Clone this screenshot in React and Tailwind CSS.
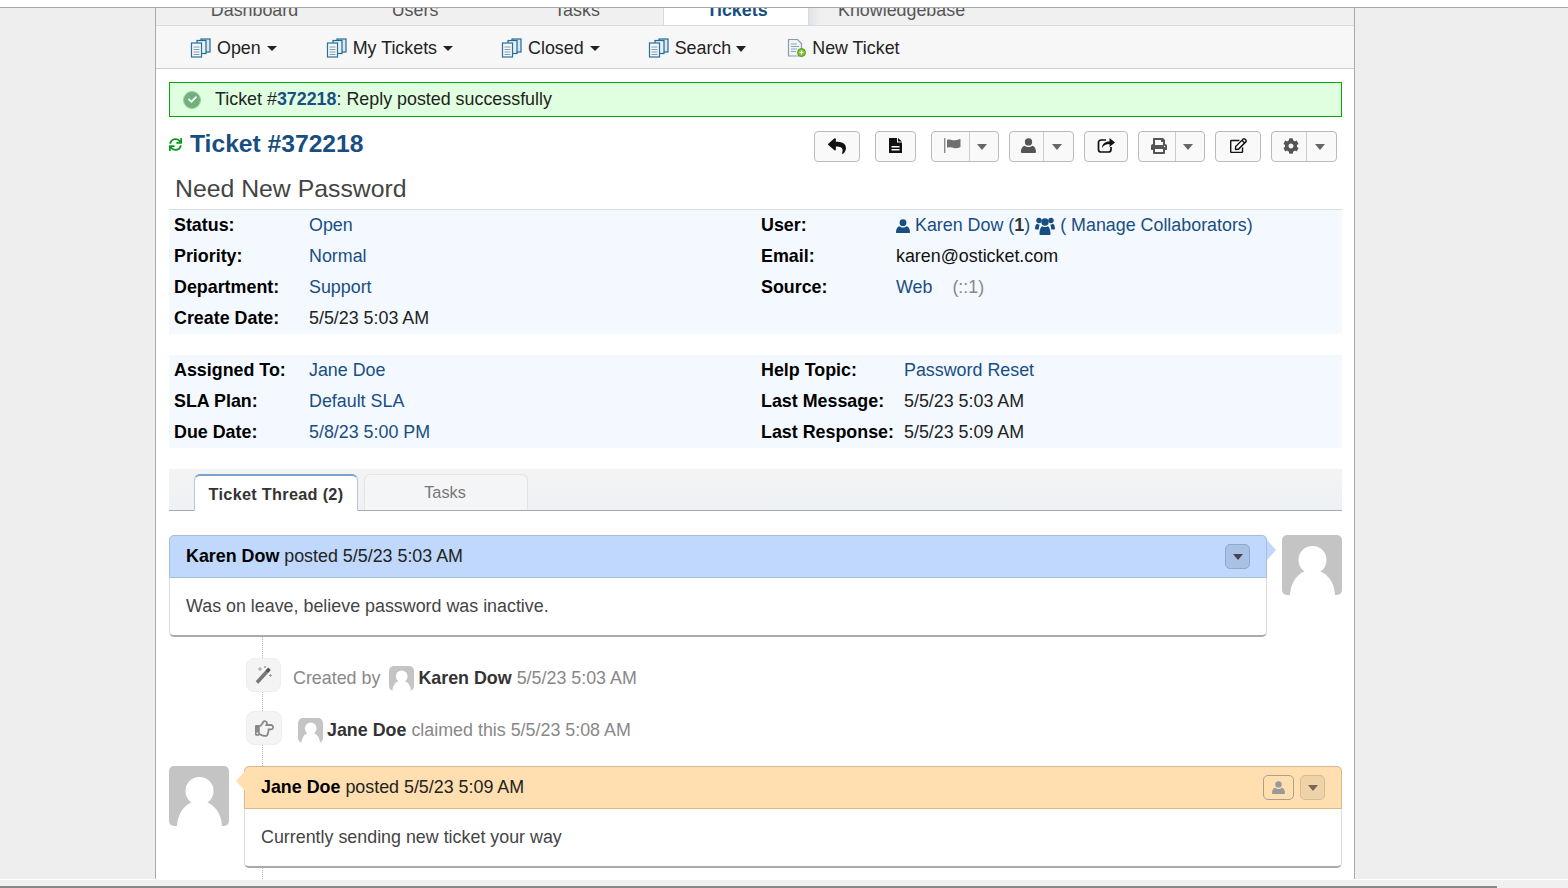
import React from 'react';
import { FaReply, FaPrint, FaRegEdit, FaCog, FaSync, FaRegHandPointRight, FaCheck } from 'react-icons/fa';

const Caret = ({ className = 'border-x-[5px] border-t-[6px] border-t-[#666]' }) => (
  <span className={`inline-block w-0 h-0 border-x-transparent ${className}`}></span>
);

// stacked documents icon from the nav bar
const QueueIcon = () => (
  <svg width="22" height="20" viewBox="0 0 22 20" className="shrink-0">
    <rect x="11" y="1" width="9" height="13" fill="#dbe7f0" stroke="#1f6a94" strokeWidth="1.2" />
    <rect x="7" y="2.5" width="9" height="13" fill="#e8eff5" stroke="#1f6a94" strokeWidth="1.2" />
    <rect x="1.5" y="5" width="10" height="14" fill="#f5f8fb" stroke="#2a6f97" strokeWidth="1.2" />
    <path d="M3.5 9h6M3.5 11.5h6M3.5 14h6M3.5 16.5h6" stroke="#7d9db3" strokeWidth="1" />
  </svg>
);

const NewTicketIcon = () => (
  <svg width="20" height="20" viewBox="0 0 20 20" className="shrink-0">
    <path d="M1.5 1.5h9l4 4v12.5h-13z" fill="#f1f4f7" stroke="#8a9aac" strokeWidth="1.2" />
    <path d="M4 6h6M4 8.5h8M4 11h6M4 13.5h5" stroke="#8fa3b8" strokeWidth="1" />
    <circle cx="14.5" cy="14.5" r="4" fill="#7cc234" stroke="#5a9a1e" strokeWidth="1" />
    <path d="M14.5 12.5v4M12.5 14.5h4" stroke="#fff" strokeWidth="1.2" />
  </svg>
);

const SaveIcon = () => (
  <svg width="13" height="15" viewBox="0 0 13 15" className="-mt-[2px]">
    <path d="M0 0h8v4.5h5V15H0z" fill="#111" />
    <path d="M9 0l4 3.5H9z" fill="#111" />
    <rect x="2.5" y="8" width="8" height="1.5" fill="#fff" />
    <rect x="2.5" y="11" width="8" height="1.5" fill="#fff" />
  </svg>
);

const FlagIcon = () => (
  <svg width="17" height="15" viewBox="0 0 17 15" className="-mt-[2px]">
    <rect x="0" y="0" width="1.4" height="15" fill="#8a8a8a" />
    <path d="M3 2c3-1.5 5 .8 8 .3 2-.3 4-1 5.500-1.300v8c-2 1-4 1.500-6 1.200-3-.4-5-1.500-7.500-.4z" fill="#6f6f6f" />
  </svg>
);

const ShareIcon = () => (
  <svg width="18" height="17" viewBox="0 0 18 17" className="-mt-[2px]">
    <path d="M9 3H4a2.500 2.500 0 0 0-2.500 2.500v7A2.500 2.500 0 0 0 4 15h7.500a2.500 2.500 0 0 0 2.500-2.500V10" fill="none" stroke="#111" strokeWidth="1.700" />
    <path d="M5 11c0-4 3-6.500 7.500-6.500V1L18 5.500 12.500 10V7C9 7 6.500 8.500 5 11z" fill="#111" />
  </svg>
);

// old style person glyph, wide shoulders
const UserGlyph = ({ size, className }) => (
  <svg width={size} height={size} viewBox="0 0 16 16" className={className} fill="currentColor">
    <circle cx="8" cy="4.200" r="3.900" />
    <path d="M1 16c-.6 0-1-.4-1-1 0-3.500 1.500-6.500 4-6.800 1 1 2.400 1.500 4 1.500s3-.5 4-1.500c2.500.3 4 3.300 4 6.800 0 .6-.4 1-1 1z" />
  </svg>
);

const UsersGlyph = () => (
  <svg width="20" height="18" viewBox="0 0 20 18" className="mx-[5px]" fill="currentColor">
    <circle cx="4" cy="3.500" r="2.700" />
    <circle cx="16" cy="3.500" r="2.700" />
    <path d="M0 12c0-3 .8-5 2.500-5.200.6.600 1.300.9 2.200.9-.5 1.200-.8 2.700-.9 4.800H1c-.6 0-1-.2-1-.5z" />
    <path d="M20 12c0-3-.8-5-2.500-5.200-.6.600-1.300.9-2.200.9.500 1.200.8 2.700.9 4.800H19c.6 0 1-.2 1-.5z" />
    <circle cx="10" cy="5" r="3.700" />
    <path d="M5.500 18c-.6 0-1-.4-1-1 0-4 1.200-7.500 3-7.800.7.600 1.500.9 2.500.9s1.800-.3 2.500-.9c1.800.3 3 3.800 3 7.800 0 .6-.4 1-1 1z" />
  </svg>
);

const WandIcon = () => (
  <svg width="18" height="18" viewBox="0 0 18 18">
    <path d="M2 16.500L11.500 6" stroke="#777" strokeWidth="3.600" />
    <path d="M11.500 6L14.500 2.700" stroke="#555" strokeWidth="3.600" />
    <path d="M5 1v4M3 3h4M15.500 8v3M14 9.500h3M10 0v2M9 1h2" stroke="#999" strokeWidth="0.900" />
  </svg>
);

const Avatar = ({ size }) => (
  <svg width={size} height={size} viewBox="0 0 60 60" className="shrink-0 rounded-[5px] bg-[#c4c4c4]">
    <circle cx="30.500" cy="25" r="14" fill="#fff" />
    <path d="M8 60C9 45 18 35 30 35C43 35 52 45 53 60Z" fill="#fff" />
  </svg>
);

const NavItem = ({ icon, label, caret, className }) => (
  <div className={`flex items-center ${className}`}>
    {icon}
    <span className="ml-[5px] text-[#222]">{label}</span>
    {caret}
  </div>
);

const ToolButton = ({ width, children }) => (
  <div className={`h-[31px] ${width} flex items-center justify-center bg-[#f9f9f9] border border-[#bbb] rounded-[4px]`}>
    {children}
  </div>
);

const SplitButton = ({ left, right, children }) => (
  <div className="h-[31px] flex items-center bg-[#f9f9f9] border border-[#bbb] rounded-[4px]">
    <div className={`${left} h-full pl-[4px] flex items-center justify-center border-r border-[#ccc]`}>{children}</div>
    <div className={`${right} h-full pr-[4px] flex items-center justify-center`}><Caret /></div>
  </div>
);

const InfoRow = ({ label, labelWidth = 'w-[135px]', children }) => (
  <div className="h-[31px] flex items-center">
    <div className={`${labelWidth} shrink-0 font-bold text-black`}>{label}</div>
    <div className="text-[#184e81]">{children}</div>
  </div>
);

const Dots = ({ height }) => (
  <div className={`ml-[93px] ${height} border-l border-dotted border-[#bbb]`}></div>
);

const EventIcon = ({ width, children }) => (
  <div className={`${width} h-[34px] shrink-0 flex items-center justify-center bg-[#f4f4f4] border border-[#eee] rounded-[8px] text-[#888]`}>
    {children}
  </div>
);

const navCaret = <Caret className="ml-[6px] border-x-[5px] border-t-[5px] border-t-[#222]" />;

export default function App() {
  return (
    <div className="w-[1568px] h-[888px] overflow-hidden flex flex-col bg-[#eee] text-[17.875px] text-[#333] font-['Liberation_Sans',Arial,sans-serif]">
      {/* browser strip */}
      <div className="h-[8px] shrink-0 bg-white border-b border-[#aaa]"></div>

      <div className="h-[871px] shrink-0 overflow-hidden">
        <div className="ml-[155px] w-[1200px] h-full overflow-hidden bg-white border-x border-[#aaa]">
          {/* Top tabs, cut off by the viewport */}
          <div className="h-[18px] flex bg-[#f0f0f0] border-b border-[#d5dde3] text-[#555] overflow-hidden">
            <div className="w-[197px] text-center -mt-[8px] leading-[20px]">Dashboard</div>
            <div className="w-[124px] text-center -mt-[8px] leading-[20px]">Users</div>
            <div className="w-[186px] pl-[14px] text-center -mt-[8px] leading-[20px]">Tasks</div>
            <div className="w-[146px] h-[19px] bg-white border-x border-[#d5dde3] pl-[2px] text-center font-bold text-[#184e81]">
              <div className="-mt-[8px] leading-[20px]">Tickets</div>
            </div>
            <div className="pl-[29px] -mt-[8px] leading-[20px] bg-gradient-to-r from-[#dfe3e6] from-0% to-[#f0f0f0] to-[12px]">Knowledgebase</div>
          </div>

          {/* Sub nav */}
          <div className="h-[43px] flex items-center pl-[34px] pt-[2px] bg-[#f7f7f7] border-b border-[#ccc]">
            <NavItem icon={<QueueIcon />} label="Open" caret={navCaret} />
            <NavItem icon={<QueueIcon />} label="My Tickets" caret={navCaret} className="ml-[49px]" />
            <NavItem icon={<QueueIcon />} label="Closed" caret={navCaret} className="ml-[48px]" />
            <NavItem
              icon={<QueueIcon />}
              label="Search"
              caret={<Caret className="ml-[5px] mt-[2px] border-x-[5.500px] border-t-[6px] border-t-[#222]" />}
              className="ml-[48px]"
            />
            <NavItem icon={<NewTicketIcon />} label="New Ticket" className="ml-[41px]" />
          </div>

          <div className="pl-[13px] pr-[12px]">
            {/* Success message */}
            <div className="mt-[13px] h-[35px] flex items-center bg-[#e0ffe0] border border-[#0aa50a] pl-[13px] text-[#222]">
              <span className="w-[18px] h-[18px] rounded-full bg-[#6fb278] border border-[#a8c8ac] flex items-center justify-center">
                <FaCheck size={9} className="text-white" />
              </span>
              <span className="ml-[14px]">
                Ticket #<span className="font-bold text-[#184e81]">372218</span>: Reply posted successfully
              </span>
            </div>

            {/* Title and actions */}
            <div className="mt-[14px] h-[41px] flex items-start justify-between">
              <div className="flex items-center h-[26px]">
                <FaSync size={13} className="text-[#0a9a1e]" />
                <span className="ml-[8px] text-[24.640px] font-bold text-[#184e81]">Ticket #372218</span>
              </div>
              <div className="flex items-center gap-[10px] mr-[5px]">
                <ToolButton width="w-[46px]"><FaReply size={18} className="text-[#111] -mt-[2px]" /></ToolButton>
                <div className="ml-[5px]"><ToolButton width="w-[41px]"><SaveIcon /></ToolButton></div>
                <div className="ml-[5px]"><SplitButton left="w-[38px]" right="w-[28px]"><FlagIcon /></SplitButton></div>
                <SplitButton left="w-[34px]" right="w-[29px]"><UserGlyph size={15} className="text-[#555] -mt-[2px]" /></SplitButton>
                <ToolButton width="w-[44px]"><ShareIcon /></ToolButton>
                <SplitButton left="w-[37px]" right="w-[28px]"><FaPrint size={16} className="text-[#555] -mt-[2px]" /></SplitButton>
                <ToolButton width="w-[46px]"><FaRegEdit size={17} className="text-[#111] -mt-[2px]" /></ToolButton>
                <SplitButton left="w-[35px]" right="w-[29px]"><FaCog size={16} className="text-[#555] -mt-[2px]" /></SplitButton>
              </div>
            </div>

            {/* Subject */}
            <div className="h-[37px] pl-[6px] text-[24.800px] leading-[34px] text-[#444]">Need New Password</div>

            {/* Info block 1 */}
            <div className="flex bg-[#f4f9ff] border-t border-[#ddd] pl-[5px]">
              <div className="w-[587px] shrink-0">
                <InfoRow label="Status:">Open</InfoRow>
                <InfoRow label="Priority:">Normal</InfoRow>
                <InfoRow label="Department:">Support</InfoRow>
                <InfoRow label="Create Date:"><span className="text-[#222]">5/5/23 5:03 AM</span></InfoRow>
              </div>
              <div className="flex-1">
                <InfoRow label="User:">
                  <span className="flex items-center whitespace-pre">
                    <UserGlyph size={14} className="mr-[5px]" />
                    Karen Dow (<b className="text-[#333]">1</b>)
                    <UsersGlyph />
                    ( Manage Collaborators)
                  </span>
                </InfoRow>
                <InfoRow label="Email:"><span className="text-[#111]">karen@osticket.com</span></InfoRow>
                <InfoRow label="Source:">Web<span className="ml-[20px] text-[#888]">(::1)</span></InfoRow>
              </div>
            </div>

            {/* Info block 2 */}
            <div className="mt-[21px] flex bg-[#f4f9ff] pl-[5px]">
              <div className="w-[587px] shrink-0">
                <InfoRow label="Assigned To:">Jane Doe</InfoRow>
                <InfoRow label="SLA Plan:">Default SLA</InfoRow>
                <InfoRow label="Due Date:">5/8/23 5:00 PM</InfoRow>
              </div>
              <div className="flex-1">
                <InfoRow label="Help Topic:" labelWidth="w-[143px]">Password Reset</InfoRow>
                <InfoRow label="Last Message:" labelWidth="w-[143px]"><span className="text-[#222]">5/5/23 5:03 AM</span></InfoRow>
                <InfoRow label="Last Response:" labelWidth="w-[143px]"><span className="text-[#222]">5/5/23 5:09 AM</span></InfoRow>
              </div>
            </div>

            {/* Thread tabs */}
            <div className="mt-[21px] h-[42px] flex items-end pl-[25px] gap-[6px] bg-gradient-to-b from-[#f3f3f3] to-[#eef1f4] border-b border-[#aaa]">
              <div className="w-[164px] h-[37px] -mb-[1px] pt-[1px] flex items-center justify-center bg-white border border-b-0 border-[#b9c7d6] border-t-2 border-t-[#7ba3cf] rounded-t-[6px] text-[16.250px] font-bold tracking-[0.3px] text-[#333]">
                Ticket Thread (2)
              </div>
              <div className="w-[164px] h-[36px] pr-[2px] flex items-center justify-center bg-[#f4f5f6] border border-b-0 border-[#e2e4e6] rounded-t-[6px] text-[16.250px] text-[#777]">
                Tasks
              </div>
            </div>

            {/* First entry */}
            <div className="mt-[24px] flex items-start">
              <div className="relative w-[1098px] h-[102px] shrink-0 bg-white border-x border-[#ddd] border-b-2 border-b-[#aaa] rounded-[5px]">
                <div className="-mx-[1px] h-[43px] flex items-center justify-between pl-[16px] pr-[16px] bg-[#c0d8fb] border border-[#a3bde0] rounded-t-[5px]">
                  <span className="text-[#222]"><b className="text-black">Karen Dow</b> posted 5/5/23 5:03 AM</span>
                  <span className="w-[25px] h-[25px] flex items-center justify-center bg-[#a9c2e3] border border-[#8fa9cc] rounded-[5px]">
                    <Caret className="border-x-[5px] border-t-[6px] border-t-[#445]" />
                  </span>
                </div>
                <div className="pl-[16px] pt-[15px] text-[#444]">Was on leave, believe password was inactive.</div>
                <span className="absolute left-[1097px] top-[5px] w-0 h-0 border-y-[10px] border-y-transparent border-l-[9px] border-l-[#c0d8fb]"></span>
              </div>
              <div className="ml-[15px]"><Avatar size={60} /></div>
            </div>

            {/* Events */}
            <Dots height="h-[21px]" />
            <div className="flex items-start ml-[77px] h-[34px] text-[#888]">
              <EventIcon width="w-[35px]"><WandIcon /></EventIcon>
              <div className="flex items-center mt-[7px]">
                <span className="ml-[12px]">Created by</span>
                <span className="ml-[9px]"><Avatar size={25} /></span>
                <b className="ml-[4px] text-[#333]">Karen Dow</b>
                <span className="ml-[5px]">5/5/23 5:03 AM</span>
              </div>
            </div>
            <Dots height="h-[19px]" />
            <div className="flex items-start ml-[77px] h-[34px] text-[#888]">
              <EventIcon width="w-[36px]"><FaRegHandPointRight size={19} /></EventIcon>
              <div className="flex items-center mt-[6px]">
                <span className="ml-[16px]"><Avatar size={25} /></span>
                <b className="ml-[4px] text-[#333]">Jane Doe</b>
                <span className="ml-[5px]">claimed this 5/5/23 5:08 AM</span>
              </div>
            </div>
            <Dots height="h-[21px]" />

            {/* Second entry */}
            <div className="flex items-start">
              <Avatar size={60} />
              <div className="relative ml-[15px] flex-1 h-[102px] bg-white border-x border-[#ddd] border-b-2 border-b-[#aaa] rounded-[5px]">
                <div className="-mx-[1px] h-[43px] flex items-center justify-between pl-[16px] pr-[16px] bg-[#ffdfb0] border border-[#d9b98c] rounded-t-[5px]">
                  <span className="text-[#222]"><b className="text-black">Jane Doe</b> posted 5/5/23 5:09 AM</span>
                  <span className="flex items-center gap-[6px]">
                    <span className="w-[31px] h-[25px] flex items-center justify-center border border-[#aaa08f] rounded-[5px] text-[#999]">
                      <UserGlyph size={13} />
                    </span>
                    <span className="w-[25px] h-[25px] flex items-center justify-center bg-[#efd3a8] border border-[#d6bd95] rounded-[5px]">
                      <Caret className="border-x-[5px] border-t-[6px] border-t-[#765]" />
                    </span>
                  </span>
                </div>
                <div className="pl-[16px] pt-[15px] text-[#444]">Currently sending new ticket your way</div>
                <span className="absolute -left-[9px] top-[5px] w-0 h-0 border-y-[10px] border-y-transparent border-r-[9px] border-r-[#ffdfb0]"></span>
              </div>
            </div>
            <Dots height="h-[11px]" />
          </div>
        </div>
      </div>

      {/* horizontal scrollbar */}
      <div className="flex-1 bg-[#f0f0f0] border-t border-white relative">
        <div className="absolute left-0 bottom-0 w-[1497px] h-[2px] bg-[#888]"></div>
      </div>
    </div>
  );
}
